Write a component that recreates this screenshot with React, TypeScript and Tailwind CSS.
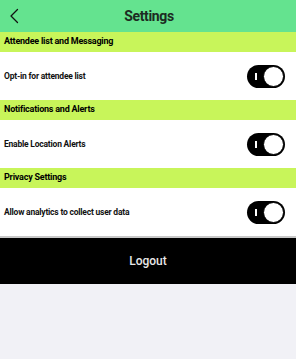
import React, { useState } from 'react';

const sections = [
  { title: 'Attendee list and Messaging', label: 'Opt-in for attendee list' },
  { title: 'Notifications and Alerts', label: 'Enable Location Alerts' },
  { title: 'Privacy Settings', label: 'Allow analytics to collect user data' },
];

const Toggle = ({ on, onClick }: { on: boolean; onClick: () => void }) => (
  <button
    onClick={onClick}
    className={`relative flex h-[23px] w-[38px] items-center rounded-full ${on ? 'bg-black' : 'bg-gray-300'}`}
  >
    <span className="absolute left-[8px] top-[8px] h-[7px] w-[1.5px] bg-white" />
    <span
      className={`absolute top-[1px] h-[21px] w-[21px] rounded-full border-[1.5px] border-black bg-white ${on ? 'right-[1px]' : 'left-[1px]'}`}
    />
  </button>
);

export default function App() {
  const [values, setValues] = useState([true, true, true]);

  return (
    <div className="flex min-h-[359px] w-[296px] flex-col bg-[#f1f1f6]" style={{ fontFamily: 'Roboto, "Liberation Sans", sans-serif' }}>
      <div className="relative flex h-8 items-center justify-center bg-[#64e38f]">
        <svg className="absolute left-[9px] top-[8px]" width="10" height="16" viewBox="0 0 10 16" fill="none">
          <path d="M8.5 1.5 L2 8 L8.5 14.5" stroke="#111" strokeWidth="1.3" strokeLinecap="round" strokeLinejoin="round" />
        </svg>
        <span className="pl-[2px] text-[14px] font-bold tracking-tight text-[#1c2b22]">Settings</span>
      </div>

      {sections.map((s, i) => (
        <div key={s.title}>
          <div className="flex h-5 items-center bg-[#c8f55a] px-[4px] text-[9px] font-bold tracking-tight text-black">
            {s.title}
          </div>
          <div className="flex h-12 items-center justify-between bg-white pl-[4px] pr-[11px]">
            <span className="text-[8.5px] font-bold tracking-tight text-[#111]">{s.label}</span>
            <Toggle
              on={values[i]}
              onClick={() => setValues(values.map((v, j) => (j === i ? !v : v)))}
            />
          </div>
        </div>
      ))}

      <div className="h-[2px] bg-[#c8c8c8]" />
      <button className="flex h-[46px] items-center justify-center bg-black text-[12px] font-medium text-[#e8e8e8]">
        Logout
      </button>
    </div>
  );
}
